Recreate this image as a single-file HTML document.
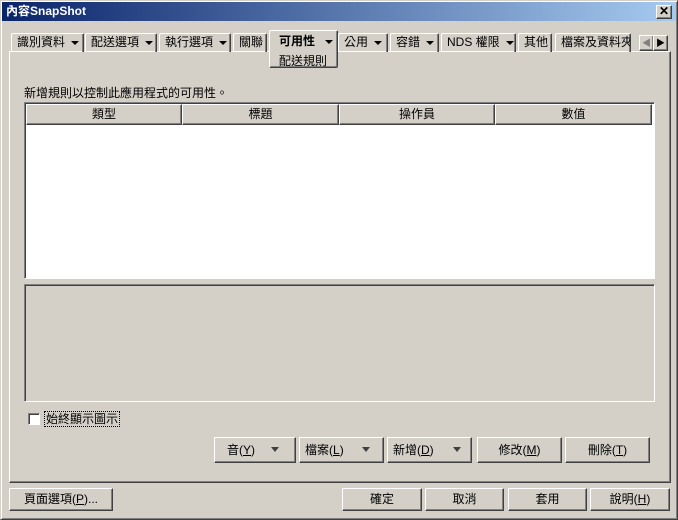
<!DOCTYPE html>
<html><head><meta charset="utf-8"><style>
*{box-sizing:border-box;margin:0;padding:0}
body{width:678px;height:520px;background:#d4d0c8;font-family:"Liberation Sans","Noto Sans CJK TC","WenQuanYi Zen Hei",sans-serif;font-size:12px;color:#000;position:relative;overflow:hidden}
.a{position:absolute}
.win{left:0;top:0;width:678px;height:520px;border:1px solid;border-color:#d4d0c8 #404040 #404040 #d4d0c8;box-shadow:inset 1px 1px #fff,inset -1px -1px #808080}
.title{left:2px;top:2px;width:674px;height:19px;background:linear-gradient(90deg,#0a246a,#a6caf0);color:#fff;font-weight:bold;font-size:12px;line-height:19px;padding-left:4px}
.btn{position:absolute;background:#d4d0c8;border:1px solid;border-color:#fff #404040 #404040 #fff;box-shadow:inset -1px -1px #808080;text-align:center;line-height:21px}
.tab{position:absolute;top:33px;height:19px;border:1px solid;border-bottom:none;border-color:#fff #404040 #404040 #fff;box-shadow:inset -1px 0 #808080;border-radius:2px 2px 0 0;line-height:17px;padding-left:5px;white-space:nowrap;overflow:hidden}
.dd{display:inline-block;width:0;height:0;border-left:4px solid transparent;border-right:4px solid transparent;border-top:4px solid #000;vertical-align:middle;margin-left:6px}
.hdr{position:absolute;top:104px;height:21px;border:1px solid;border-color:#fff #404040 #404040 #fff;box-shadow:inset -1px -1px #808080;background:#d4d0c8;text-align:center;line-height:19px}
.sunk{border:1px solid;border-color:#808080 #fff #fff #808080;box-shadow:inset 1px 1px #404040}
.ddb{border-left:4px solid transparent;border-right:4px solid transparent;border-top:5px solid #404040;position:absolute;top:9px;width:0;height:0}
</style></head><body>
<div class="a win"></div>
<div class="a title">內容SnapShot</div>
<div class="btn" style="left:656px;top:5px;width:16px;height:14px;line-height:11px;font-size:12px;font-weight:bold">✕</div>

<div class="a" style="left:9px;top:51px;width:662px;height:432px;border:1px solid;border-color:#fff #404040 #404040 #fff;box-shadow:inset -1px -1px #808080"></div>

<div class="tab" style="left:11px;width:73px">識別資料<span class="dd"></span></div>
<div class="tab" style="left:85px;width:72px">配送選項<span class="dd"></span></div>
<div class="tab" style="left:159px;width:72px">執行選項<span class="dd"></span></div>
<div class="tab" style="left:233px;width:34px">關聯</div>
<div class="tab" style="left:338px;width:50px">公用<span class="dd"></span></div>
<div class="tab" style="left:390px;width:49px">容錯<span class="dd"></span></div>
<div class="tab" style="left:441px;width:75px">NDS 權限<span class="dd"></span></div>
<div class="tab" style="left:518px;width:34px">其他</div>
<div class="tab" style="left:555px;width:76px">檔案及資料夾</div>
<div class="tab" style="left:269px;top:30px;width:69px;height:38px;background:#d4d0c8;border-bottom:1px solid #404040;box-shadow:inset -1px -1px #808080;border-radius:2px;padding-left:9px;line-height:20px"><b>可用性</b><span class="dd" style="margin-left:10px"></span><br><span style="line-height:14px">配送規則</span></div>
<div class="btn" style="left:639px;top:35px;width:15px;height:16px;line-height:14px;font-size:9px;color:#808080">◀</div>
<div class="btn" style="left:653px;top:35px;width:15px;height:16px;line-height:14px;font-size:9px">▶</div>

<div class="a" style="left:24px;top:84px">新增規則以控制此應用程式的可用性。</div>
<div class="a sunk" style="left:24px;top:102px;width:631px;height:177px;background:#fff"></div>
<div class="hdr" style="left:26px;width:156px">類型</div>
<div class="hdr" style="left:182px;width:157px">標題</div>
<div class="hdr" style="left:339px;width:156px">操作員</div>
<div class="hdr" style="left:495px;width:157px">數值</div>
<div class="a sunk" style="left:24px;top:284px;width:631px;height:118px"></div>

<div class="a sunk" style="left:28px;top:413px;width:12px;height:12px;background:#fff"></div>
<div class="a" style="left:44px;top:411px;border:1px dotted #000;padding:0 1px;line-height:14px">始終顯示圖示</div>

<div class="btn" style="left:214px;top:437px;width:82px;height:26px;line-height:24px;text-align:left;padding-left:12px">音(<u>Y</u>)<span class="ddb" style="left:56px"></span></div>
<div class="btn" style="left:299px;top:437px;width:85px;height:26px;line-height:24px;text-align:left;padding-left:5px">檔案(<u>L</u>)<span class="ddb" style="left:62px"></span></div>
<div class="btn" style="left:387px;top:437px;width:85px;height:26px;line-height:24px;text-align:left;padding-left:5px">新增(<u>D</u>)<span class="ddb" style="left:65px"></span></div>
<div class="btn" style="left:477px;top:437px;width:85px;height:26px;line-height:24px">修改(<u>M</u>)</div>
<div class="btn" style="left:565px;top:437px;width:85px;height:26px;line-height:24px">刪除(<u>T</u>)</div>

<div class="btn" style="left:9px;top:488px;width:104px;height:23px">頁面選項(<u>P</u>)...</div>
<div class="btn" style="left:342px;top:488px;width:80px;height:23px">確定</div>
<div class="btn" style="left:425px;top:488px;width:79px;height:23px">取消</div>
<div class="btn" style="left:508px;top:488px;width:79px;height:23px">套用</div>
<div class="btn" style="left:590px;top:488px;width:80px;height:23px">說明(<u>H</u>)</div>
</body></html>
